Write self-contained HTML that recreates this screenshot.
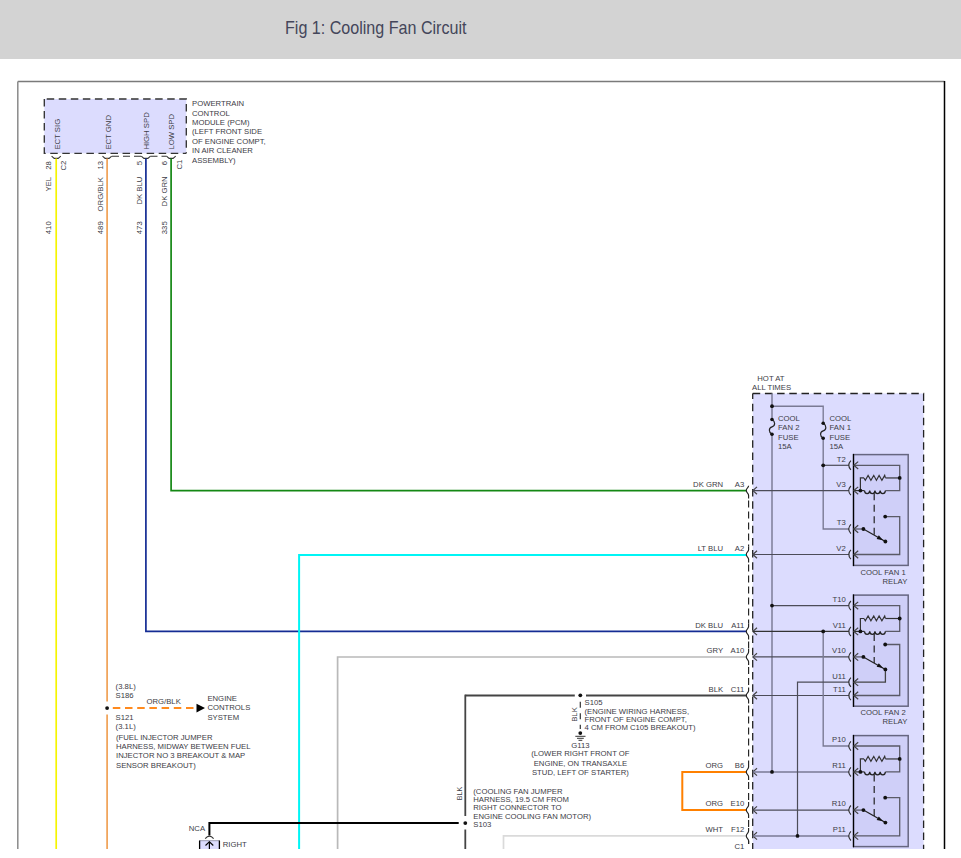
<!DOCTYPE html>
<html><head><meta charset="utf-8"><style>
html,body{margin:0;padding:0;background:#fff;width:961px;height:858px;overflow:hidden}
svg{display:block}
text{font-family:"Liberation Sans",sans-serif}
</style></head><body>
<svg width="961" height="858" viewBox="0 0 961 858">
<rect x="0" y="0" width="961" height="59" fill="#d3d3d3"/>
<text x="285" y="34" font-size="18.6" fill="#44465a" textLength="181.5" lengthAdjust="spacingAndGlyphs">Fig 1: Cooling Fan Circuit</text>
<line x1="17.8" y1="81.6" x2="944.5" y2="81.6" stroke="#7a7a7a" stroke-width="1.5" />
<line x1="17.8" y1="81.6" x2="17.8" y2="849" stroke="#8a8a8a" stroke-width="1.5" />
<line x1="944.5" y1="81" x2="944.5" y2="849" stroke="#000" stroke-width="1.5" />
<rect x="44.3" y="99" width="142" height="54.3" fill="#dcdcfe"/>
<path d="M44.3,99 H186.3 V153.3" fill="none" stroke="#333" stroke-width="1.35" stroke-dasharray="7.5 4.55" stroke-dashoffset="-2.4"/>
<path d="M44.3,99 V153.3 H186.3" fill="none" stroke="#333" stroke-width="1.35" stroke-dasharray="7.5 4.55"/>
<text x="0" y="0" font-size="8.0" text-anchor="start" fill="#3c3c46" transform="translate(192,106.4) scale(0.965,1)" >POWERTRAIN</text>
<text x="0" y="0" font-size="8.0" text-anchor="start" fill="#3c3c46" transform="translate(192,115.75) scale(0.965,1)" >CONTROL</text>
<text x="0" y="0" font-size="8.0" text-anchor="start" fill="#3c3c46" transform="translate(192,125.1) scale(0.965,1)" >MODULE (PCM)</text>
<text x="0" y="0" font-size="8.0" text-anchor="start" fill="#3c3c46" transform="translate(192,134.45) scale(0.965,1)" >(LEFT FRONT SIDE</text>
<text x="0" y="0" font-size="8.0" text-anchor="start" fill="#3c3c46" transform="translate(192,143.8) scale(0.965,1)" >OF ENGINE COMPT,</text>
<text x="0" y="0" font-size="8.0" text-anchor="start" fill="#3c3c46" transform="translate(192,153.15) scale(0.965,1)" >IN AIR CLEANER</text>
<text x="0" y="0" font-size="8.0" text-anchor="start" fill="#3c3c46" transform="translate(192,162.5) scale(0.965,1)" >ASSEMBLY)</text>
<text x="0" y="0" font-size="8.0" text-anchor="start" fill="#3c3c46" transform="translate(59.6,149.6) rotate(-90) scale(0.965,1)">ECT SIG</text>
<text x="0" y="0" font-size="8.0" text-anchor="start" fill="#3c3c46" transform="translate(110.6,149.6) rotate(-90) scale(0.965,1)">ECT GND</text>
<text x="0" y="0" font-size="8.0" text-anchor="start" fill="#3c3c46" transform="translate(149.1,149.6) rotate(-90) scale(0.965,1)">HIGH SPD</text>
<text x="0" y="0" font-size="8.0" text-anchor="start" fill="#3c3c46" transform="translate(174.1,149.6) rotate(-90) scale(0.965,1)">LOW SPD</text>
<polyline points="51.6,156.2 54.2,158.4 58.2,158.4 60.800000000000004,156.2" fill="none" stroke="#333" stroke-width="1.1" />
<polyline points="102.5,156.2 105.1,158.4 109.1,158.4 111.69999999999999,156.2" fill="none" stroke="#333" stroke-width="1.1" />
<polyline points="141.3,156.2 143.9,158.4 147.9,158.4 150.5,156.2" fill="none" stroke="#333" stroke-width="1.1" />
<polyline points="166.5,156.2 169.1,158.4 173.1,158.4 175.7,156.2" fill="none" stroke="#333" stroke-width="1.1" />
<line x1="112" y1="156.3" x2="141.5" y2="156.3" stroke="#333" stroke-width="1.1" stroke-dasharray="7 4"/>
<line x1="150.5" y1="156.3" x2="166.5" y2="156.3" stroke="#333" stroke-width="1.1" stroke-dasharray="7 4"/>
<text x="0" y="0" font-size="8.0" text-anchor="start" fill="#3c3c46" transform="translate(51.2,169.7) rotate(-90) scale(0.965,1)">28</text>
<text x="0" y="0" font-size="8.0" text-anchor="start" fill="#3c3c46" transform="translate(66.2,170.6) rotate(-90) scale(0.965,1)">C2</text>
<text x="0" y="0" font-size="8.0" text-anchor="start" fill="#3c3c46" transform="translate(103.1,169.5) rotate(-90) scale(0.965,1)">13</text>
<text x="0" y="0" font-size="8.0" text-anchor="start" fill="#3c3c46" transform="translate(141.6,165.2) rotate(-90) scale(0.965,1)">5</text>
<text x="0" y="0" font-size="8.0" text-anchor="start" fill="#3c3c46" transform="translate(167.4,165.2) rotate(-90) scale(0.965,1)">6</text>
<text x="0" y="0" font-size="8.0" text-anchor="start" fill="#3c3c46" transform="translate(181.6,169.6) rotate(-90) scale(0.965,1)">C1</text>
<text x="0" y="0" font-size="8.0" text-anchor="start" fill="#3c3c46" transform="translate(51.2,191.6) rotate(-90) scale(0.965,1)">YEL</text>
<text x="0" y="0" font-size="8.0" text-anchor="start" fill="#3c3c46" transform="translate(103.1,211.4) rotate(-90) scale(0.965,1)">ORG/BLK</text>
<text x="0" y="0" font-size="8.0" text-anchor="start" fill="#3c3c46" transform="translate(141.6,204.5) rotate(-90) scale(0.965,1)">DK BLU</text>
<text x="0" y="0" font-size="8.0" text-anchor="start" fill="#3c3c46" transform="translate(167.4,206.4) rotate(-90) scale(0.965,1)">DK GRN</text>
<text x="0" y="0" font-size="8.0" text-anchor="start" fill="#3c3c46" transform="translate(51.2,234.2) rotate(-90) scale(0.965,1)">410</text>
<text x="0" y="0" font-size="8.0" text-anchor="start" fill="#3c3c46" transform="translate(103.1,234.2) rotate(-90) scale(0.965,1)">489</text>
<text x="0" y="0" font-size="8.0" text-anchor="start" fill="#3c3c46" transform="translate(141.6,234.2) rotate(-90) scale(0.965,1)">473</text>
<text x="0" y="0" font-size="8.0" text-anchor="start" fill="#3c3c46" transform="translate(167.4,234.2) rotate(-90) scale(0.965,1)">335</text>
<line x1="56.2" y1="158.4" x2="56.2" y2="849" stroke="#f5f500" stroke-width="1.7" />
<line x1="107.1" y1="158.4" x2="107.1" y2="701.5" stroke="#f0a155" stroke-width="1.7" />
<line x1="107.1" y1="714.5" x2="107.1" y2="849" stroke="#f0a155" stroke-width="1.7" />
<line x1="112.8" y1="708.1" x2="194" y2="708.1" stroke="#ff8a1e" stroke-width="2" stroke-dasharray="7.5 4.7"/>
<polygon points="196.5,703.8 205,708.1 196.5,712.5" fill="#000"/>
<text x="0" y="0" font-size="8.0" text-anchor="start" fill="#3c3c46" transform="translate(146.5,703.6) scale(0.965,1)" >ORG/BLK</text>
<text x="0" y="0" font-size="8.0" text-anchor="start" fill="#3c3c46" transform="translate(207.4,700.8) scale(0.965,1)" >ENGINE</text>
<text x="0" y="0" font-size="8.0" text-anchor="start" fill="#3c3c46" transform="translate(207.4,710.4) scale(0.965,1)" >CONTROLS</text>
<text x="0" y="0" font-size="8.0" text-anchor="start" fill="#3c3c46" transform="translate(207.4,720.0) scale(0.965,1)" >SYSTEM</text>
<text x="0" y="0" font-size="8.0" text-anchor="start" fill="#3c3c46" transform="translate(115.6,689.4) scale(0.965,1)" >(3.8L)</text>
<text x="0" y="0" font-size="8.0" text-anchor="start" fill="#3c3c46" transform="translate(115.6,698.4) scale(0.965,1)" >S186</text>
<text x="0" y="0" font-size="8.0" text-anchor="start" fill="#3c3c46" transform="translate(115.6,720) scale(0.965,1)" >S121</text>
<text x="0" y="0" font-size="8.0" text-anchor="start" fill="#3c3c46" transform="translate(115.6,729) scale(0.965,1)" >(3.1L)</text>
<text x="0" y="0" font-size="8.0" text-anchor="start" fill="#3c3c46" transform="translate(116,739.6) scale(0.965,1)" >(FUEL INJECTOR JUMPER</text>
<text x="0" y="0" font-size="8.0" text-anchor="start" fill="#3c3c46" transform="translate(116,748.97) scale(0.965,1)" >HARNESS, MIDWAY BETWEEN FUEL</text>
<text x="0" y="0" font-size="8.0" text-anchor="start" fill="#3c3c46" transform="translate(116,758.34) scale(0.965,1)" >INJECTOR NO 3 BREAKOUT &amp; MAP</text>
<text x="0" y="0" font-size="8.0" text-anchor="start" fill="#3c3c46" transform="translate(116,767.71) scale(0.965,1)" >SENSOR BREAKOUT)</text>
<polyline points="171.1,158.4 171.1,490.6 746.3,490.6" fill="none" stroke="#148814" stroke-width="1.7" />
<polyline points="145.9,158.4 145.9,631.4 746.3,631.4" fill="none" stroke="#142c94" stroke-width="1.7" />
<polyline points="299.1,849 299.1,554.9 746.3,554.9" fill="none" stroke="#00f5f5" stroke-width="2" />
<polyline points="337.6,849 337.6,657 746.3,657" fill="none" stroke="#b9b9b9" stroke-width="1.7" />
<line x1="465.3" y1="695.5" x2="574.8" y2="695.5" stroke="#444" stroke-width="1.8" />
<line x1="586" y1="695.5" x2="746.3" y2="695.5" stroke="#444" stroke-width="1.8" />
<line x1="465.3" y1="694.6" x2="465.3" y2="816" stroke="#444" stroke-width="1.8" />
<line x1="465.3" y1="829.5" x2="465.3" y2="849" stroke="#444" stroke-width="1.8" />
<line x1="580.3" y1="701.8" x2="580.3" y2="729" stroke="#333" stroke-width="1.2" stroke-dasharray="6 5.5"/>
<line x1="575.3" y1="736.3" x2="585.5" y2="736.3" stroke="#333" stroke-width="1" />
<line x1="577" y1="738.3" x2="583.8" y2="738.3" stroke="#333" stroke-width="1" />
<line x1="578.5" y1="740.3" x2="582.3" y2="740.3" stroke="#333" stroke-width="1" />
<text x="0" y="0" font-size="8.0" text-anchor="start" fill="#3c3c46" transform="translate(577.3,721.8) rotate(-90) scale(0.965,1)">BLK</text>
<text x="0" y="0" font-size="8.0" text-anchor="start" fill="#3c3c46" transform="translate(584.5,705.4) scale(0.965,1)" >S105</text>
<text x="0" y="0" font-size="8.0" text-anchor="start" fill="#3c3c46" transform="translate(584.5,713.6) scale(0.965,1)" >(ENGINE WIRING HARNESS,</text>
<text x="0" y="0" font-size="8.0" text-anchor="start" fill="#3c3c46" transform="translate(584.5,721.9) scale(0.965,1)" >FRONT OF ENGINE COMPT,</text>
<text x="0" y="0" font-size="8.0" text-anchor="start" fill="#3c3c46" transform="translate(584.5,730.2) scale(0.965,1)" >4 CM FROM C105 BREAKOUT)</text>
<text x="0" y="0" font-size="8.0" text-anchor="middle" fill="#3c3c46" transform="translate(580.4,747.6) scale(0.965,1)" >G113</text>
<text x="0" y="0" font-size="8.0" text-anchor="middle" fill="#3c3c46" transform="translate(580.4,756.4) scale(0.965,1)" >(LOWER RIGHT FRONT OF</text>
<text x="0" y="0" font-size="8.0" text-anchor="middle" fill="#3c3c46" transform="translate(580.4,765.85) scale(0.965,1)" >ENGINE, ON TRANSAXLE</text>
<text x="0" y="0" font-size="8.0" text-anchor="middle" fill="#3c3c46" transform="translate(580.4,775.3) scale(0.965,1)" >STUD, LEFT OF STARTER)</text>
<text x="0" y="0" font-size="7.37" text-anchor="start" fill="#3c3c46" transform="translate(462,800.2) rotate(-90) scale(0.965,1)">BLK</text>
<text x="0" y="0" font-size="8.0" text-anchor="start" fill="#3c3c46" transform="translate(473.3,793.9) scale(0.965,1)" >(COOLING FAN JUMPER</text>
<text x="0" y="0" font-size="8.0" text-anchor="start" fill="#3c3c46" transform="translate(473.3,802.1) scale(0.965,1)" >HARNESS, 19.5 CM FROM</text>
<text x="0" y="0" font-size="8.0" text-anchor="start" fill="#3c3c46" transform="translate(473.3,810.3) scale(0.965,1)" >RIGHT CONNECTOR TO</text>
<text x="0" y="0" font-size="8.0" text-anchor="start" fill="#3c3c46" transform="translate(473.3,818.5) scale(0.965,1)" >ENGINE COOLING FAN MOTOR)</text>
<text x="0" y="0" font-size="8.0" text-anchor="start" fill="#3c3c46" transform="translate(473.3,826.7) scale(0.965,1)" >S103</text>
<polyline points="458.7,823.1 209.4,823.1 209.4,835.6" fill="none" stroke="#000" stroke-width="2" />
<path d="M205.2,838.6 Q209.4,833.6 213.6,838.6" fill="none" stroke="#333" stroke-width="1.1"/>
<rect x="199.6" y="840.7" width="19.8" height="10" fill="#dcdcfe"/>
<line x1="199.6" y1="840.7" x2="219.4" y2="840.7" stroke="#9a9ab0" stroke-width="1" />
<line x1="199.6" y1="840.5" x2="199.6" y2="849" stroke="#000" stroke-width="1.3" />
<line x1="219.4" y1="840.5" x2="219.4" y2="849" stroke="#000" stroke-width="1.3" />
<line x1="209.4" y1="841.8" x2="209.4" y2="849" stroke="#000" stroke-width="1.2" />
<polyline points="205.5,845.5 209.4,841.8 213.3,845.5" fill="none" stroke="#000" stroke-width="1.1" />
<text x="0" y="0" font-size="8.0" text-anchor="start" fill="#3c3c46" transform="translate(188.8,831.2) scale(0.965,1)" >NCA</text>
<text x="0" y="0" font-size="8.0" text-anchor="start" fill="#3c3c46" transform="translate(222.7,846.8) scale(0.965,1)" >RIGHT</text>
<polyline points="503.5,849 503.5,835.9 746.3,835.9" fill="none" stroke="#dadada" stroke-width="1.7" />
<polyline points="746.3,771.9 682.3,771.9 682.3,810.1 746.3,810.1" fill="none" stroke="#ff8000" stroke-width="2" />
<rect x="752.7" y="393.5" width="170.9" height="460" fill="#dcdcfe"/>
<path d="M752.7,393.5 H923.6 V849" fill="none" stroke="#222" stroke-width="1.3" stroke-dasharray="7.5 4.7"/>
<path d="M752.7,393.5 V849" fill="none" stroke="#222" stroke-width="1.3" stroke-dasharray="7.5 4.7" stroke-dashoffset="2"/>
<text x="0" y="0" font-size="8.0" text-anchor="start" fill="#3c3c46" transform="translate(757.3,380.6) scale(0.965,1)" >HOT AT</text>
<text x="0" y="0" font-size="8.0" text-anchor="start" fill="#3c3c46" transform="translate(752,390.4) scale(0.965,1)" >ALL TIMES</text>
<path d="M748.6,485.8 C748.6,488.0 746.3,488.0 746.3,490.6 C746.3,493.20000000000005 748.6,493.20000000000005 748.6,495.40000000000003 V498.6" fill="none" stroke="#222" stroke-width="1.15"/>
<polyline points="757,486.90000000000003 752.9,490.6 757,494.3" fill="none" stroke="#444" stroke-width="1.2" />
<line x1="748.6" y1="498.6" x2="748.6" y2="546.5" stroke="#222" stroke-width="1.15" stroke-dasharray="7 4" stroke-dashoffset="-2"/>
<text x="0" y="0" font-size="8.0" text-anchor="end" fill="#3c3c46" transform="translate(723.1,486.7) scale(0.965,1)" >DK GRN</text>
<text x="0" y="0" font-size="8.0" text-anchor="end" fill="#3c3c46" transform="translate(744.3,486.7) scale(0.965,1)" >A3</text>
<path d="M748.6,546.5 V549.7 C748.6,551.9 746.3,551.9 746.3,554.5 C746.3,557.1 748.6,557.1 748.6,559.3 V562.5" fill="none" stroke="#222" stroke-width="1.15"/>
<polyline points="757,550.8 752.9,554.5 757,558.2" fill="none" stroke="#444" stroke-width="1.2" />
<line x1="748.6" y1="562.5" x2="748.6" y2="623.4" stroke="#222" stroke-width="1.15" stroke-dasharray="7 4" stroke-dashoffset="-2"/>
<text x="0" y="0" font-size="8.0" text-anchor="end" fill="#3c3c46" transform="translate(723.1,550.6) scale(0.965,1)" >LT BLU</text>
<text x="0" y="0" font-size="8.0" text-anchor="end" fill="#3c3c46" transform="translate(744.3,550.6) scale(0.965,1)" >A2</text>
<path d="M748.6,623.4 V626.6 C748.6,628.8 746.3,628.8 746.3,631.4 C746.3,634.0 748.6,634.0 748.6,636.1999999999999 V639.4" fill="none" stroke="#222" stroke-width="1.15"/>
<polyline points="757,627.6999999999999 752.9,631.4 757,635.1" fill="none" stroke="#444" stroke-width="1.2" />
<line x1="748.6" y1="639.4" x2="748.6" y2="648.9" stroke="#222" stroke-width="1.15" stroke-dasharray="7 4" stroke-dashoffset="-2"/>
<text x="0" y="0" font-size="8.0" text-anchor="end" fill="#3c3c46" transform="translate(723.1,627.5) scale(0.965,1)" >DK BLU</text>
<text x="0" y="0" font-size="8.0" text-anchor="end" fill="#3c3c46" transform="translate(744.3,627.5) scale(0.965,1)" >A11</text>
<path d="M748.6,648.9 V652.1 C748.6,654.3 746.3,654.3 746.3,656.9 C746.3,659.5 748.6,659.5 748.6,661.6999999999999 V664.9" fill="none" stroke="#222" stroke-width="1.15"/>
<polyline points="757,653.1999999999999 752.9,656.9 757,660.6" fill="none" stroke="#444" stroke-width="1.2" />
<line x1="748.6" y1="664.9" x2="748.6" y2="687.5" stroke="#222" stroke-width="1.15" stroke-dasharray="7 4" stroke-dashoffset="-2"/>
<text x="0" y="0" font-size="8.0" text-anchor="end" fill="#3c3c46" transform="translate(723.1,653.0) scale(0.965,1)" >GRY</text>
<text x="0" y="0" font-size="8.0" text-anchor="end" fill="#3c3c46" transform="translate(744.3,653.0) scale(0.965,1)" >A10</text>
<path d="M748.6,687.5 V690.7 C748.6,692.9 746.3,692.9 746.3,695.5 C746.3,698.1 748.6,698.1 748.6,700.3 V703.5" fill="none" stroke="#222" stroke-width="1.15"/>
<polyline points="757,691.8 752.9,695.5 757,699.2" fill="none" stroke="#444" stroke-width="1.2" />
<line x1="748.6" y1="703.5" x2="748.6" y2="763.9" stroke="#222" stroke-width="1.15" stroke-dasharray="7 4" stroke-dashoffset="-2"/>
<text x="0" y="0" font-size="8.0" text-anchor="end" fill="#3c3c46" transform="translate(723.1,691.6) scale(0.965,1)" >BLK</text>
<text x="0" y="0" font-size="8.0" text-anchor="end" fill="#3c3c46" transform="translate(744.3,691.6) scale(0.965,1)" >C11</text>
<path d="M748.6,763.9 V767.1 C748.6,769.3 746.3,769.3 746.3,771.9 C746.3,774.5 748.6,774.5 748.6,776.6999999999999 V779.9" fill="none" stroke="#222" stroke-width="1.15"/>
<polyline points="757,768.1999999999999 752.9,771.9 757,775.6" fill="none" stroke="#444" stroke-width="1.2" />
<line x1="748.6" y1="779.9" x2="748.6" y2="802.1" stroke="#222" stroke-width="1.15" stroke-dasharray="7 4" stroke-dashoffset="-2"/>
<text x="0" y="0" font-size="8.0" text-anchor="end" fill="#3c3c46" transform="translate(723.1,768.0) scale(0.965,1)" >ORG</text>
<text x="0" y="0" font-size="8.0" text-anchor="end" fill="#3c3c46" transform="translate(744.3,768.0) scale(0.965,1)" >B6</text>
<path d="M748.6,802.1 V805.3000000000001 C748.6,807.5 746.3,807.5 746.3,810.1 C746.3,812.7 748.6,812.7 748.6,814.9 V818.1" fill="none" stroke="#222" stroke-width="1.15"/>
<polyline points="757,806.4 752.9,810.1 757,813.8000000000001" fill="none" stroke="#444" stroke-width="1.2" />
<line x1="748.6" y1="818.1" x2="748.6" y2="827.9" stroke="#222" stroke-width="1.15" stroke-dasharray="7 4" stroke-dashoffset="-2"/>
<text x="0" y="0" font-size="8.0" text-anchor="end" fill="#3c3c46" transform="translate(723.1,806.2) scale(0.965,1)" >ORG</text>
<text x="0" y="0" font-size="8.0" text-anchor="end" fill="#3c3c46" transform="translate(744.3,806.2) scale(0.965,1)" >E10</text>
<path d="M748.6,827.9 V831.1 C748.6,833.3 746.3,833.3 746.3,835.9 C746.3,838.5 748.6,838.5 748.6,840.6999999999999 V843.9" fill="none" stroke="#222" stroke-width="1.15"/>
<polyline points="757,832.1999999999999 752.9,835.9 757,839.6" fill="none" stroke="#444" stroke-width="1.2" />
<line x1="748.6" y1="843.9" x2="748.6" y2="840.8" stroke="#222" stroke-width="1.15" />
<text x="0" y="0" font-size="8.0" text-anchor="end" fill="#3c3c46" transform="translate(723.1,832.0) scale(0.965,1)" >WHT</text>
<text x="0" y="0" font-size="8.0" text-anchor="end" fill="#3c3c46" transform="translate(744.3,832.0) scale(0.965,1)" >F12</text>
<text x="0" y="0" font-size="8.0" text-anchor="end" fill="#3c3c46" transform="translate(744.3,848.6) scale(0.965,1)" >C1</text>
<line x1="772" y1="393.5" x2="772" y2="419.5" stroke="#7a7a94" stroke-width="1.45" />
<line x1="772" y1="434.3" x2="772" y2="771.9" stroke="#7a7a94" stroke-width="1.45" />
<path d="M772,419.5 C775.5,421.5 775.5,425.9 772,426.9 C768.5,427.9 768.5,432.3 772,434.3" fill="none" stroke="#222" stroke-width="1.2"/>
<polyline points="772,406.2 823.2,406.2 823.2,423.3" fill="none" stroke="#7a7a94" stroke-width="1.35" />
<path d="M823.2,423.3 C826.7,425.3 826.7,429.8 823.2,430.8 C819.7,431.8 819.7,436.3 823.2,438.3" fill="none" stroke="#222" stroke-width="1.2"/>
<polyline points="823.2,438.3 823.2,529 849,529" fill="none" stroke="#7a7a94" stroke-width="1.4" />
<line x1="823.2" y1="465.3" x2="849" y2="465.3" stroke="#4c4c58" stroke-width="1.2" />
<text x="0" y="0" font-size="8.0" text-anchor="start" fill="#3c3c46" transform="translate(778,420.9) scale(0.965,1)" >COOL</text>
<text x="0" y="0" font-size="8.0" text-anchor="start" fill="#3c3c46" transform="translate(778,430.35) scale(0.965,1)" >FAN 2</text>
<text x="0" y="0" font-size="8.0" text-anchor="start" fill="#3c3c46" transform="translate(778,439.8) scale(0.965,1)" >FUSE</text>
<text x="0" y="0" font-size="8.0" text-anchor="start" fill="#3c3c46" transform="translate(778,449.25) scale(0.965,1)" >15A</text>
<text x="0" y="0" font-size="8.0" text-anchor="start" fill="#3c3c46" transform="translate(829.5,420.9) scale(0.965,1)" >COOL</text>
<text x="0" y="0" font-size="8.0" text-anchor="start" fill="#3c3c46" transform="translate(829.5,430.35) scale(0.965,1)" >FAN 1</text>
<text x="0" y="0" font-size="8.0" text-anchor="start" fill="#3c3c46" transform="translate(829.5,439.8) scale(0.965,1)" >FUSE</text>
<text x="0" y="0" font-size="8.0" text-anchor="start" fill="#3c3c46" transform="translate(829.5,449.25) scale(0.965,1)" >15A</text>
<line x1="752.9" y1="490.6" x2="849" y2="490.6" stroke="#4c4c58" stroke-width="1.2" />
<line x1="752.9" y1="554.5" x2="849" y2="554.5" stroke="#4c4c58" stroke-width="1.2" />
<line x1="752.9" y1="656.9" x2="849" y2="656.9" stroke="#4c4c58" stroke-width="1.2" />
<line x1="752.9" y1="695.5" x2="849" y2="695.5" stroke="#4c4c58" stroke-width="1.2" />
<line x1="752.9" y1="810.1" x2="849" y2="810.1" stroke="#4c4c58" stroke-width="1.2" />
<line x1="752.9" y1="631.4" x2="849" y2="631.4" stroke="#333" stroke-width="1.3" />
<line x1="752.9" y1="771.9" x2="849" y2="771.9" stroke="#7a7a94" stroke-width="1.5" />
<line x1="752.9" y1="835.9" x2="849" y2="835.9" stroke="#7a7a94" stroke-width="1.5" />
<line x1="772" y1="605.6" x2="849" y2="605.6" stroke="#4c4c58" stroke-width="1.3" />
<polyline points="823.2,631.4 823.2,746 849,746" fill="none" stroke="#7a7a94" stroke-width="1.4" />
<polyline points="849,682.2 797.5,682.2 797.5,835.9" fill="none" stroke="#4c4c58" stroke-width="1.2" />
<rect x="853.5" y="454.6" width="54.7" height="110.79999999999995" fill="#cfcff8" stroke="#666680" stroke-width="1.5"/>
<line x1="853.5" y1="453.90000000000003" x2="853.5" y2="566.1" stroke="#000" stroke-width="1.2" />
<polyline points="853.8,465.3 899.7,465.3 899.7,490.6 885.4,490.6" fill="none" stroke="#5a5a66" stroke-width="1.3" />
<line x1="885.4" y1="477.95000000000005" x2="899.7" y2="477.95000000000005" stroke="#333" stroke-width="1.2" />
<polyline points="864,477.95000000000005 865.3,480.25000000000006 868.1,475.35 870.9,480.25000000000006 873.75,475.35 876.4,480.25000000000006 879.1,475.35 881.9,480.25000000000006 884.7,475.35 885.4,477.95000000000005" fill="none" stroke="#333" stroke-width="1.15" />
<polyline points="864,477.95000000000005 860.4,477.95000000000005 860.4,490.6" fill="none" stroke="#333" stroke-width="1.2" />
<path d="M864.5,490.6 c0.3,4.0 4.9249999999999945,4.0 5.224999999999994,0 c0.3,4.0 4.9249999999999945,4.0 5.224999999999994,0 c0.3,4.0 4.9249999999999945,4.0 5.224999999999994,0 c0.3,4.0 4.9249999999999945,4.0 5.224999999999994,0" fill="none" stroke="#222" stroke-width="1.2"/>
<line x1="853.8" y1="490.6" x2="864.5" y2="490.6" stroke="#333" stroke-width="1.2" />
<line x1="874.2" y1="493.20000000000005" x2="874.2" y2="535" stroke="#222" stroke-width="1.2" stroke-dasharray="7 4.5"/>
<line x1="853.8" y1="529" x2="863.4" y2="529" stroke="#5a5a66" stroke-width="1.3" />
<line x1="863.4" y1="529" x2="885.4" y2="541.5" stroke="#222" stroke-width="1.2" />
<polygon points="883.0,540.2 876.6,538.9 878.8,535.3" fill="#111"/>
<polyline points="885.2,516.6 899.7,516.6 899.7,554.5 853.8,554.5" fill="none" stroke="#5a5a66" stroke-width="1.3" />
<path d="M850.9,460.7 Q846.6,465.3 850.9,469.90000000000003" fill="none" stroke="#333" stroke-width="1.15"/>
<polyline points="858.2,461.6 853.8,465.3 858.2,469.0" fill="none" stroke="#444" stroke-width="1.2" />
<text x="0" y="0" font-size="8.0" text-anchor="end" fill="#3c3c46" transform="translate(845.8,461.6) scale(0.965,1)" >T2</text>
<path d="M850.9,486.0 Q846.6,490.6 850.9,495.20000000000005" fill="none" stroke="#333" stroke-width="1.15"/>
<polyline points="858.2,486.90000000000003 853.8,490.6 858.2,494.3" fill="none" stroke="#444" stroke-width="1.2" />
<text x="0" y="0" font-size="8.0" text-anchor="end" fill="#3c3c46" transform="translate(845.8,486.9) scale(0.965,1)" >V3</text>
<path d="M850.9,524.4 Q846.6,529 850.9,533.6" fill="none" stroke="#333" stroke-width="1.15"/>
<polyline points="858.2,525.3 853.8,529 858.2,532.7" fill="none" stroke="#444" stroke-width="1.2" />
<text x="0" y="0" font-size="8.0" text-anchor="end" fill="#3c3c46" transform="translate(845.8,525.3) scale(0.965,1)" >T3</text>
<path d="M850.9,549.9 Q846.6,554.5 850.9,559.1" fill="none" stroke="#333" stroke-width="1.15"/>
<polyline points="858.2,550.8 853.8,554.5 858.2,558.2" fill="none" stroke="#444" stroke-width="1.2" />
<text x="0" y="0" font-size="8.0" text-anchor="end" fill="#3c3c46" transform="translate(845.8,550.8) scale(0.965,1)" >V2</text>
<text x="0" y="0" font-size="8.0" text-anchor="end" fill="#3c3c46" transform="translate(905.7,574.8) scale(0.965,1)" >COOL FAN 1</text>
<text x="0" y="0" font-size="8.0" text-anchor="end" fill="#3c3c46" transform="translate(907.3,583.6) scale(0.965,1)" >RELAY</text>
<rect x="853.5" y="595.1" width="54.7" height="111.10000000000002" fill="#cfcff8" stroke="#666680" stroke-width="1.5"/>
<line x1="853.5" y1="594.4" x2="853.5" y2="706.9000000000001" stroke="#000" stroke-width="1.2" />
<polyline points="853.8,605.6 899.7,605.6 899.7,631.4 885.4,631.4" fill="none" stroke="#5a5a66" stroke-width="1.3" />
<line x1="885.4" y1="618.5" x2="899.7" y2="618.5" stroke="#333" stroke-width="1.2" />
<polyline points="864,618.5 865.3,620.8 868.1,615.9 870.9,620.8 873.75,615.9 876.4,620.8 879.1,615.9 881.9,620.8 884.7,615.9 885.4,618.5" fill="none" stroke="#333" stroke-width="1.15" />
<polyline points="864,618.5 860.4,618.5 860.4,631.4" fill="none" stroke="#333" stroke-width="1.2" />
<path d="M864.5,631.4 c0.3,4.0 4.9249999999999945,4.0 5.224999999999994,0 c0.3,4.0 4.9249999999999945,4.0 5.224999999999994,0 c0.3,4.0 4.9249999999999945,4.0 5.224999999999994,0 c0.3,4.0 4.9249999999999945,4.0 5.224999999999994,0" fill="none" stroke="#222" stroke-width="1.2"/>
<line x1="853.8" y1="631.4" x2="864.5" y2="631.4" stroke="#333" stroke-width="1.2" />
<line x1="874.2" y1="634.0" x2="874.2" y2="662.9" stroke="#222" stroke-width="1.2" stroke-dasharray="7 4.5"/>
<line x1="853.8" y1="656.9" x2="863.4" y2="656.9" stroke="#5a5a66" stroke-width="1.3" />
<line x1="863.4" y1="656.9" x2="885.4" y2="669.4" stroke="#222" stroke-width="1.2" />
<polygon points="883.0,668.1 876.6,666.8 878.8,663.1999999999999" fill="#111"/>
<polyline points="885.2,644.5 899.7,644.5 899.7,695.5 853.8,695.5" fill="none" stroke="#5a5a66" stroke-width="1.3" />
<polyline points="885.4,669.4 885.4,682.2 853.8,682.2" fill="none" stroke="#444" stroke-width="1.3" />
<path d="M850.9,601.0 Q846.6,605.6 850.9,610.2" fill="none" stroke="#333" stroke-width="1.15"/>
<polyline points="858.2,601.9 853.8,605.6 858.2,609.3000000000001" fill="none" stroke="#444" stroke-width="1.2" />
<text x="0" y="0" font-size="8.0" text-anchor="end" fill="#3c3c46" transform="translate(845.8,601.9) scale(0.965,1)" >T10</text>
<path d="M850.9,626.8 Q846.6,631.4 850.9,636.0" fill="none" stroke="#333" stroke-width="1.15"/>
<polyline points="858.2,627.6999999999999 853.8,631.4 858.2,635.1" fill="none" stroke="#444" stroke-width="1.2" />
<text x="0" y="0" font-size="8.0" text-anchor="end" fill="#3c3c46" transform="translate(845.8,627.7) scale(0.965,1)" >V11</text>
<path d="M850.9,652.3 Q846.6,656.9 850.9,661.5" fill="none" stroke="#333" stroke-width="1.15"/>
<polyline points="858.2,653.1999999999999 853.8,656.9 858.2,660.6" fill="none" stroke="#444" stroke-width="1.2" />
<text x="0" y="0" font-size="8.0" text-anchor="end" fill="#3c3c46" transform="translate(845.8,653.2) scale(0.965,1)" >V10</text>
<path d="M850.9,677.6 Q846.6,682.2 850.9,686.8000000000001" fill="none" stroke="#333" stroke-width="1.15"/>
<polyline points="858.2,678.5 853.8,682.2 858.2,685.9000000000001" fill="none" stroke="#444" stroke-width="1.2" />
<text x="0" y="0" font-size="8.0" text-anchor="end" fill="#3c3c46" transform="translate(845.8,678.5) scale(0.965,1)" >U11</text>
<path d="M850.9,690.9 Q846.6,695.5 850.9,700.1" fill="none" stroke="#333" stroke-width="1.15"/>
<polyline points="858.2,691.8 853.8,695.5 858.2,699.2" fill="none" stroke="#444" stroke-width="1.2" />
<text x="0" y="0" font-size="8.0" text-anchor="end" fill="#3c3c46" transform="translate(845.8,691.8) scale(0.965,1)" >T11</text>
<text x="0" y="0" font-size="8.0" text-anchor="end" fill="#3c3c46" transform="translate(905.7,714.8) scale(0.965,1)" >COOL FAN 2</text>
<text x="0" y="0" font-size="8.0" text-anchor="end" fill="#3c3c46" transform="translate(907.3,723.6) scale(0.965,1)" >RELAY</text>
<rect x="853.5" y="735.6" width="54.7" height="111.0" fill="#cfcff8" stroke="#666680" stroke-width="1.5"/>
<line x1="853.5" y1="734.9" x2="853.5" y2="847.3000000000001" stroke="#000" stroke-width="1.2" />
<polyline points="853.8,746 899.7,746 899.7,771.9 885.4,771.9" fill="none" stroke="#5a5a66" stroke-width="1.3" />
<line x1="885.4" y1="758.95" x2="899.7" y2="758.95" stroke="#333" stroke-width="1.2" />
<polyline points="864,758.95 865.3,761.25 868.1,756.35 870.9,761.25 873.75,756.35 876.4,761.25 879.1,756.35 881.9,761.25 884.7,756.35 885.4,758.95" fill="none" stroke="#333" stroke-width="1.15" />
<polyline points="864,758.95 860.4,758.95 860.4,771.9" fill="none" stroke="#333" stroke-width="1.2" />
<path d="M864.5,771.9 c0.3,4.0 4.9249999999999945,4.0 5.224999999999994,0 c0.3,4.0 4.9249999999999945,4.0 5.224999999999994,0 c0.3,4.0 4.9249999999999945,4.0 5.224999999999994,0 c0.3,4.0 4.9249999999999945,4.0 5.224999999999994,0" fill="none" stroke="#222" stroke-width="1.2"/>
<line x1="853.8" y1="771.9" x2="864.5" y2="771.9" stroke="#333" stroke-width="1.2" />
<line x1="874.2" y1="774.5" x2="874.2" y2="816.1" stroke="#222" stroke-width="1.2" stroke-dasharray="7 4.5"/>
<line x1="853.8" y1="810.1" x2="863.4" y2="810.1" stroke="#5a5a66" stroke-width="1.3" />
<line x1="863.4" y1="810.1" x2="885.4" y2="822.6" stroke="#222" stroke-width="1.2" />
<polygon points="883.0,821.3000000000001 876.6,820.0 878.8,816.4" fill="#111"/>
<polyline points="885.2,797.7 899.7,797.7 899.7,835.9 853.8,835.9" fill="none" stroke="#5a5a66" stroke-width="1.3" />
<path d="M850.9,741.4 Q846.6,746 850.9,750.6" fill="none" stroke="#333" stroke-width="1.15"/>
<polyline points="858.2,742.3 853.8,746 858.2,749.7" fill="none" stroke="#444" stroke-width="1.2" />
<text x="0" y="0" font-size="8.0" text-anchor="end" fill="#3c3c46" transform="translate(845.8,742.3) scale(0.965,1)" >P10</text>
<path d="M850.9,767.3 Q846.6,771.9 850.9,776.5" fill="none" stroke="#333" stroke-width="1.15"/>
<polyline points="858.2,768.1999999999999 853.8,771.9 858.2,775.6" fill="none" stroke="#444" stroke-width="1.2" />
<text x="0" y="0" font-size="8.0" text-anchor="end" fill="#3c3c46" transform="translate(845.8,768.2) scale(0.965,1)" >R11</text>
<path d="M850.9,805.5 Q846.6,810.1 850.9,814.7" fill="none" stroke="#333" stroke-width="1.15"/>
<polyline points="858.2,806.4 853.8,810.1 858.2,813.8000000000001" fill="none" stroke="#444" stroke-width="1.2" />
<text x="0" y="0" font-size="8.0" text-anchor="end" fill="#3c3c46" transform="translate(845.8,806.4) scale(0.965,1)" >R10</text>
<path d="M850.9,831.3 Q846.6,835.9 850.9,840.5" fill="none" stroke="#333" stroke-width="1.15"/>
<polyline points="858.2,832.1999999999999 853.8,835.9 858.2,839.6" fill="none" stroke="#444" stroke-width="1.2" />
<text x="0" y="0" font-size="8.0" text-anchor="end" fill="#3c3c46" transform="translate(845.8,832.2) scale(0.965,1)" >P11</text>
<circle cx="107.1" cy="708.1" r="1.9" fill="#111"/>
<circle cx="580.3" cy="695.3" r="1.9" fill="#111"/>
<circle cx="465.3" cy="823.1" r="1.9" fill="#111"/>
<circle cx="580.3" cy="733.1" r="1.9" fill="#111"/>
<circle cx="772" cy="406.2" r="1.9" fill="#111"/>
<circle cx="772" cy="605.6" r="1.9" fill="#111"/>
<circle cx="772" cy="771.9" r="1.9" fill="#111"/>
<circle cx="772" cy="419.5" r="1.8" fill="#111"/>
<circle cx="772" cy="434.3" r="1.8" fill="#111"/>
<circle cx="823.2" cy="423.3" r="1.8" fill="#111"/>
<circle cx="823.2" cy="438.3" r="1.8" fill="#111"/>
<circle cx="823.2" cy="465.3" r="1.9" fill="#111"/>
<circle cx="823.2" cy="631.4" r="1.9" fill="#111"/>
<circle cx="797.5" cy="835.9" r="1.9" fill="#111"/>
<circle cx="899.7" cy="477.95000000000005" r="1.9" fill="#111"/>
<circle cx="860.4" cy="490.6" r="1.9" fill="#111"/>
<circle cx="863.4" cy="529" r="1.9" fill="#111"/>
<circle cx="885.4" cy="541.5" r="1.9" fill="#111"/>
<circle cx="885.2" cy="516.6" r="1.9" fill="#111"/>
<circle cx="899.7" cy="618.5" r="1.9" fill="#111"/>
<circle cx="860.4" cy="631.4" r="1.9" fill="#111"/>
<circle cx="863.4" cy="656.9" r="1.9" fill="#111"/>
<circle cx="885.4" cy="669.4" r="1.9" fill="#111"/>
<circle cx="885.2" cy="644.5" r="1.9" fill="#111"/>
<circle cx="899.7" cy="758.95" r="1.9" fill="#111"/>
<circle cx="860.4" cy="771.9" r="1.9" fill="#111"/>
<circle cx="863.4" cy="810.1" r="1.9" fill="#111"/>
<circle cx="885.4" cy="822.6" r="1.9" fill="#111"/>
<circle cx="885.2" cy="797.7" r="1.9" fill="#111"/>
<rect x="0" y="849" width="961" height="9" fill="#fff"/>
</svg>
</body></html>
